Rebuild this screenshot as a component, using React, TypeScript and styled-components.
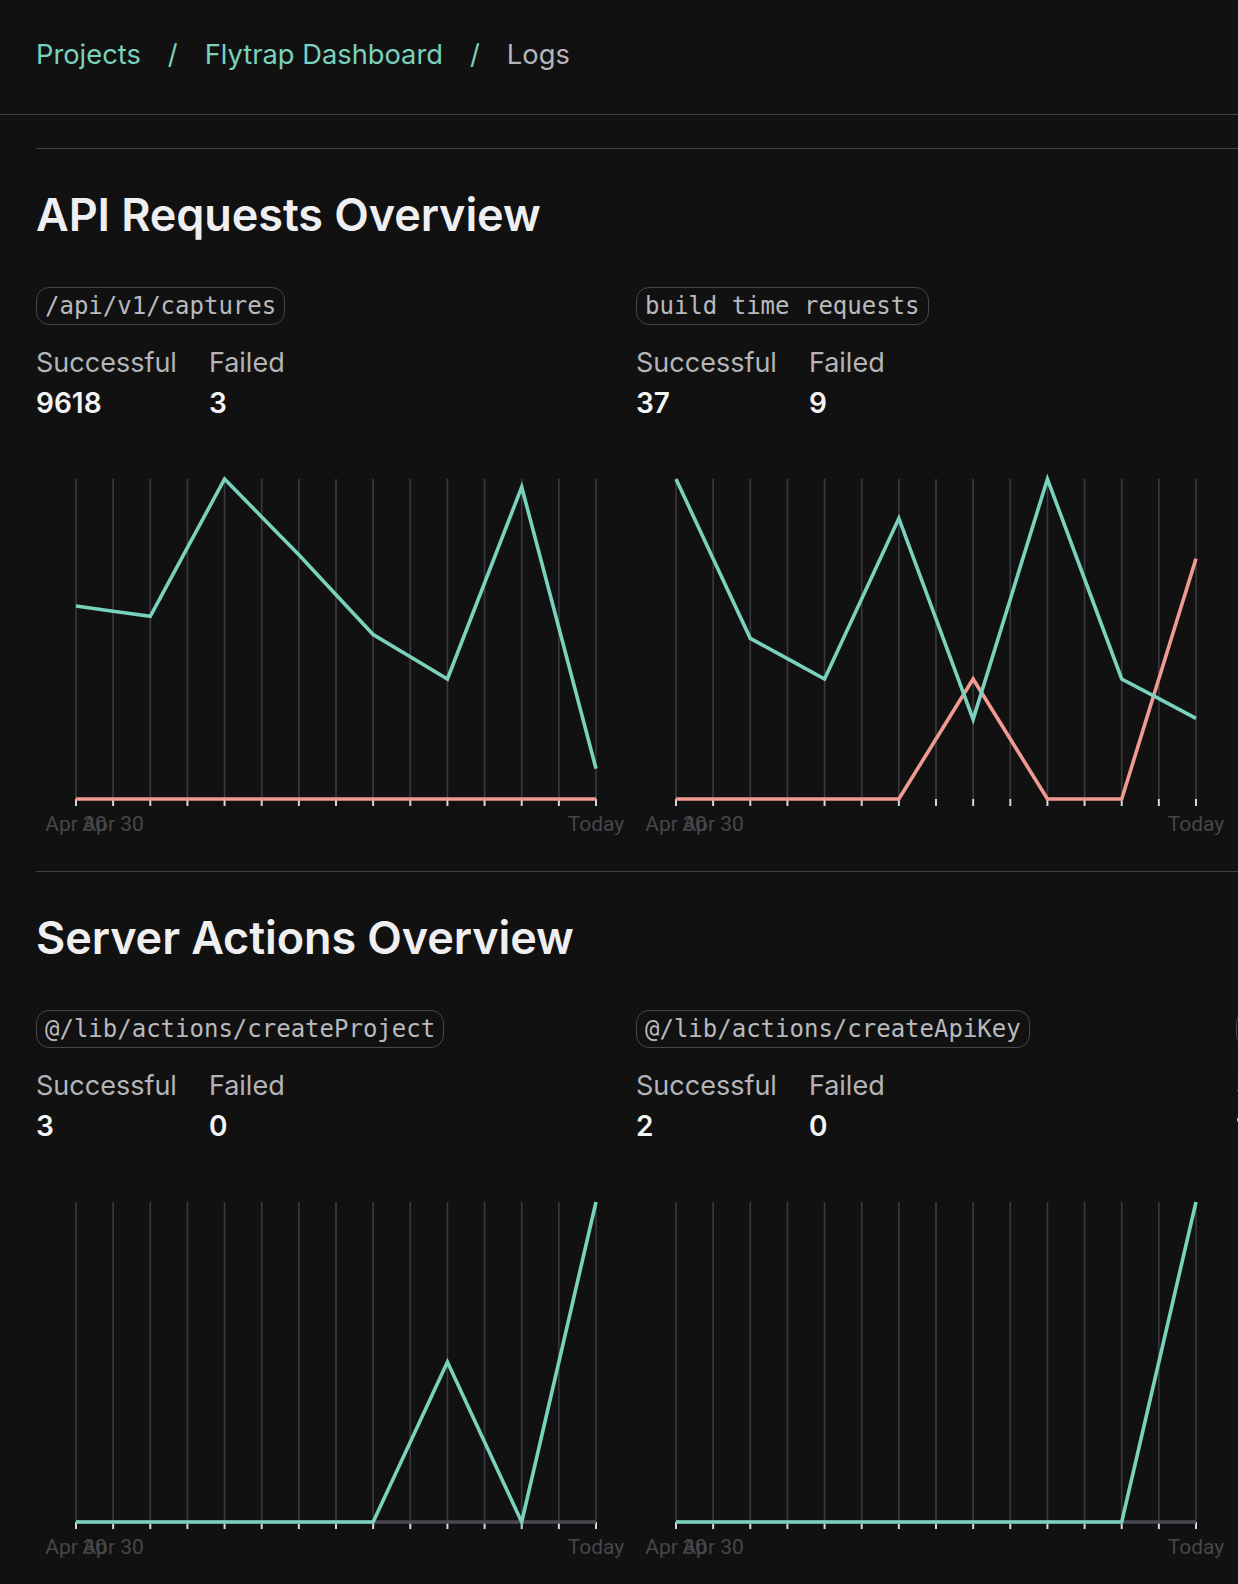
import React from "react";
import styled, { createGlobalStyle } from "styled-components";

const GlobalStyle = createGlobalStyle`
  html, body {
    margin: 0;
    padding: 0;
    background: #111111;
    overflow-x: hidden;
  }
  body {
    font-family: Inter, "Noto Sans", sans-serif;
    color: #ededef;
  }
  * { box-sizing: border-box; }
`;

const Page = styled.div`
  min-height: 1584px;
  background: #111111;
  overflow: hidden;
`;

const Header = styled.header`
  height: 115px;
  padding: 0 36px 5px;
  display: flex;
  align-items: center;
  gap: 27px;
  border-bottom: 1px solid #3f3f45;
  font-size: 27.3px;
  line-height: 34px;
`;

const Crumb = styled.a<{ $current?: boolean }>`
  color: ${(p) => (p.$current ? "#b6b5bc" : "#79d2bc")};
  text-decoration: none;
`;

const Sep = styled.span`
  color: #79d2bc;
`;

const Main = styled.main`
  padding: 33px 0 0 36px;
  width: 1900px;
`;

const Section = styled.section`
  border-top: 1px solid #3f3f45;
  padding: 38px 0 30px;
`;

const Heading = styled.h2`
  margin: 0;
  font-size: 45px;
  line-height: 56px;
  font-weight: 600;
  color: #efeff1;
  letter-spacing: -0.1px;
`;

const CardRow = styled.div`
  display: grid;
  grid-auto-flow: column;
  grid-auto-columns: 600px;
  justify-content: start;
  margin-top: 44px;
`;

const Card = styled.div`
  display: flex;
  flex-direction: column;
  align-items: flex-start;
`;

const Tag = styled.code`
  display: inline-block;
  font-family: "DejaVu Sans Mono", "Liberation Mono", monospace;
  font-size: 24px;
  line-height: 36px;
  padding: 0 8px;
  border: 1.5px solid #46464c;
  border-radius: 13px;
  color: #b9b9be;
  white-space: nowrap;
`;

const Stats = styled.div`
  display: flex;
  gap: 32px;
  margin-top: 20px;
`;

const Stat = styled.div`
  display: flex;
  flex-direction: column;
  gap: 4px;
`;

const StatLabel = styled.span`
  font-size: 27px;
  line-height: 36px;
  color: #b4b4b9;
`;

const StatValue = styled.span`
  font-size: 28px;
  line-height: 36px;
  font-weight: 600;
  color: #f4f4f5;
`;

const ChartSvg = styled.svg`
  display: block;
  margin-top: 48px;
  overflow: visible;
`;

const AxisLabel = styled.text`
  font-family: Roboto, "Liberation Sans", sans-serif;
  font-size: 21px;
  fill: #46464b;
`;

const TEAL = "#79d2bc";
const PINK = "#f19a93";
const GRAY = "#4a474f";

const W = 600;
const H = 372;
const L = 40;
const R = 560;
const T = 10;
const B = 330;
const N = 15;

function expand(evens: number[]): number[] {
  const out: number[] = [];
  evens.forEach((v, i) => {
    out.push(v);
    if (i < evens.length - 1) out.push((v + evens[i + 1]) / 2);
  });
  return out;
}

const xAt = (i: number) => L + ((R - L) * i) / (N - 1);
const yAt = (v: number) => B - (B - T) * v;

function points(vals: number[]) {
  return vals.map((v, i) => `${xAt(i).toFixed(2)},${yAt(v).toFixed(2)}`).join(" ");
}

type ChartProps = {
  success: number[];
  failed: number[];
  failedColor: string;
};

function Chart({ success, failed, failedColor }: ChartProps) {
  const idx = Array.from({ length: N }, (_, i) => i);
  return (
    <ChartSvg width={W} height={H} viewBox={`0 0 ${W} ${H}`}>
      {idx.map((i) => (
        <line key={`g${i}`} x1={xAt(i)} x2={xAt(i)} y1={T} y2={B} stroke="#3a3a40" strokeWidth={1.6} />
      ))}
      {idx.map((i) => (
        <line key={`t${i}`} x1={xAt(i)} x2={xAt(i)} y1={B} y2={B + 7} stroke="#d8d8dc" strokeWidth={2} />
      ))}
      <polyline points={points(failed)} fill="none" stroke={failedColor} strokeWidth={3.6} strokeLinejoin="miter" />
      <polyline points={points(success)} fill="none" stroke={TEAL} strokeWidth={3.6} strokeLinejoin="miter" />
      <AxisLabel x={xAt(0)} y={B + 32} textAnchor="middle">Apr 30</AxisLabel>
      <AxisLabel x={xAt(1)} y={B + 32} textAnchor="middle">Apr 30</AxisLabel>
      <AxisLabel x={xAt(14)} y={B + 32} textAnchor="middle">Today</AxisLabel>
    </ChartSvg>
  );
}

type Item = {
  name: string;
  successful: number;
  failed: number;
  success: number[];
  fail: number[];
};

const zeros = expand([0, 0, 0, 0, 0, 0, 0, 0]);

const apiItems: Item[] = [
  {
    name: "/api/v1/captures",
    successful: 9618,
    failed: 3,
    success: expand([0.603, 0.571, 1.0, 0.763, 0.514, 0.375, 0.975, 0.095]),
    fail: zeros,
  },
  {
    name: "build time requests",
    successful: 37,
    failed: 9,
    success: expand([1.0, 0.502, 0.375, 0.877, 0.249, 1.0, 0.375, 0.252]),
    fail: expand([0, 0, 0, 0, 0.375, 0, 0, 0.751]),
  },
];

const actionItems: Item[] = [
  {
    name: "@/lib/actions/createProject",
    successful: 3,
    failed: 0,
    success: expand([0, 0, 0, 0, 0, 0.5, 0, 1.0]),
    fail: zeros,
  },
  {
    name: "@/lib/actions/createApiKey",
    successful: 2,
    failed: 0,
    success: expand([0, 0, 0, 0, 0, 0, 0, 1.0]),
    fail: zeros,
  },
  {
    name: "@/lib/actions/deleteProject",
    successful: 1,
    failed: 0,
    success: expand([0, 0, 0, 0, 0, 0, 0, 1.0]),
    fail: zeros,
  },
];

function Overview({ title, items }: { title: string; items: Item[] }) {
  return (
    <Section>
      <Heading>{title}</Heading>
      <CardRow>
        {items.map((it) => (
          <Card key={it.name}>
            <Tag>{it.name}</Tag>
            <Stats>
              <Stat>
                <StatLabel>Successful</StatLabel>
                <StatValue>{it.successful}</StatValue>
              </Stat>
              <Stat>
                <StatLabel>Failed</StatLabel>
                <StatValue>{it.failed}</StatValue>
              </Stat>
            </Stats>
            <Chart success={it.success} failed={it.fail} failedColor={it.failed > 0 ? PINK : GRAY} />
          </Card>
        ))}
      </CardRow>
    </Section>
  );
}

export default function App() {
  return (
    <Page>
      <GlobalStyle />
      <Header>
        <Crumb href="#">Projects</Crumb>
        <Sep>/</Sep>
        <Crumb href="#">Flytrap Dashboard</Crumb>
        <Sep>/</Sep>
        <Crumb $current>Logs</Crumb>
      </Header>
      <Main>
        <Overview title="API Requests Overview" items={apiItems} />
        <Overview title="Server Actions Overview" items={actionItems} />
      </Main>
    </Page>
  );
}
